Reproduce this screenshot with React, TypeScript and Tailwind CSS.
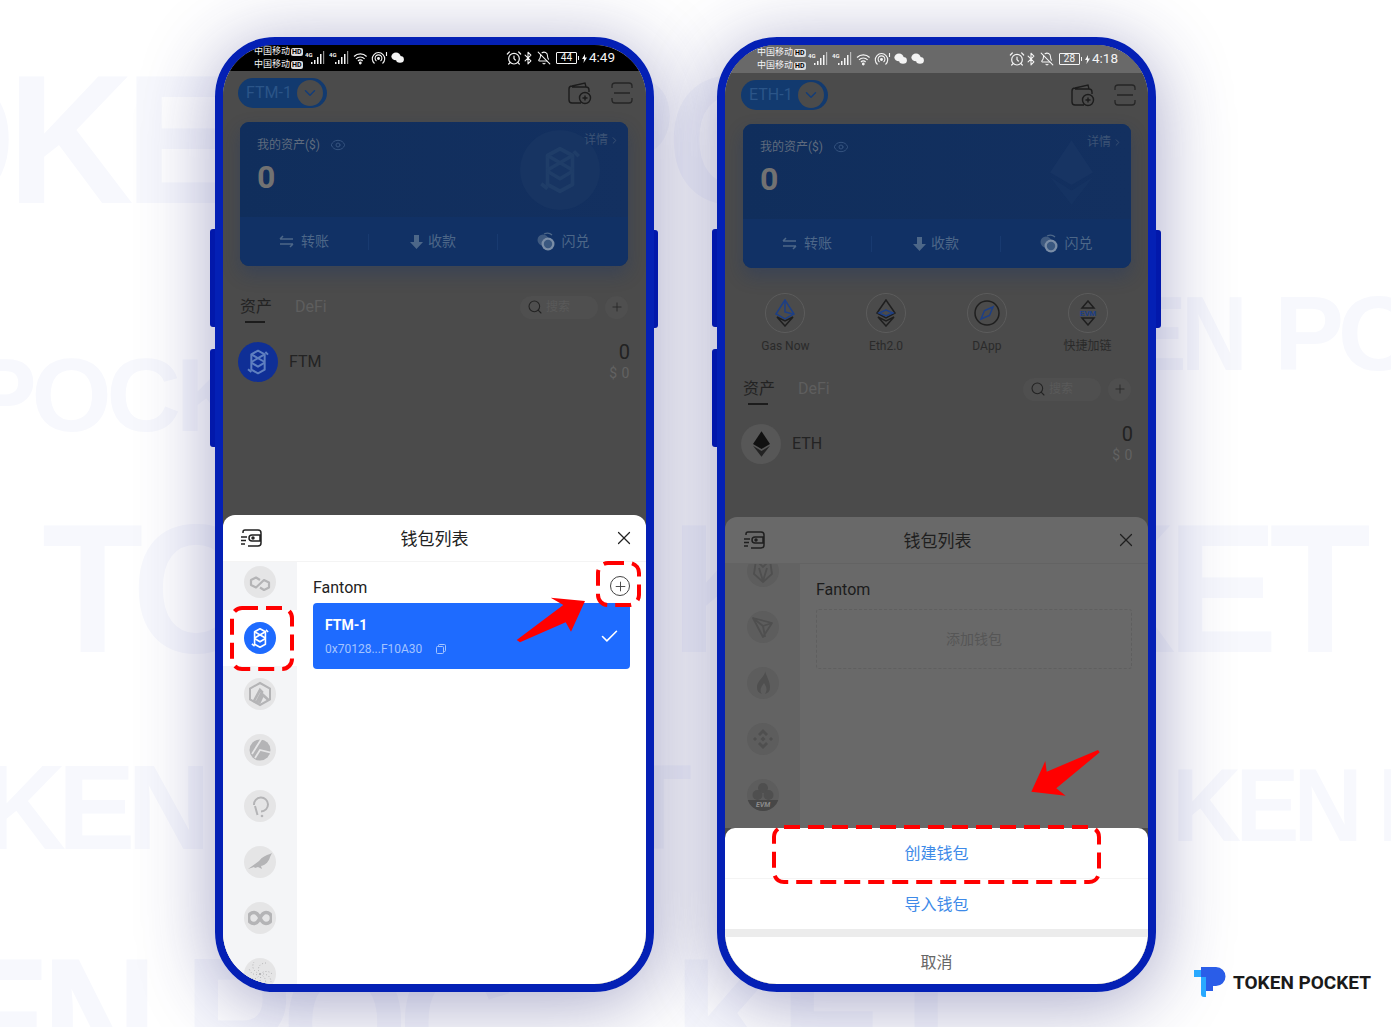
import type { ReactNode } from "react"
import { AlarmClock, BellOff, Bluetooth, Check, ChevronDown, ChevronRight, Eye, Plus, Search, X } from "lucide-react"

const watermarks = [
  { cls: "left-[-120px] top-[47px] text-[184px] tracking-[-0.05em] scale-x-[0.95]", text: "OKE" },
  { cls: "left-[559px] top-[47px] text-[184px] tracking-[-0.05em] scale-x-[0.95]", text: "PO" },
  { cls: "left-[-32px] top-[344px] text-[103px] tracking-[-0.05em]", text: "POCK" },
  { cls: "left-[1125px] top-[281px] text-[105px] tracking-[-0.06em] scale-x-[0.88]", text: "EN" },
  { cls: "left-[1274px] top-[281px] text-[105px] tracking-[-0.06em]", text: "PO" },
  { cls: "left-[42px] top-[496px] text-[184px] tracking-[-0.05em] scale-x-[0.9]", text: "TO" },
  { cls: "left-[671px] top-[496px] text-[184px] tracking-[-0.05em] scale-x-[0.9]", text: "K" },
  { cls: "left-[1056px] top-[496px] text-[184px] tracking-[-0.05em] scale-x-[0.9]", text: "KET" },
  { cls: "left-[-18px] top-[747px] text-[121px] tracking-[-0.07em] scale-x-[0.96]", text: "KEN" },
  { cls: "left-[618px] top-[747px] text-[121px] tracking-[-0.07em]", text: "T" },
  { cls: "left-[1172px] top-[754px] text-[103px] tracking-[-0.06em] scale-x-[0.93]", text: "KEN P" },
  { cls: "left-[-57px] top-[930px] text-[184px] tracking-[-0.06em] scale-x-[0.88]", text: "EN POC" },
  { cls: "left-[674px] top-[930px] text-[184px] tracking-[-0.06em] scale-x-[0.87]", text: "KET" },
]

function Signal() {
  return (
    <svg width="21" height="14" viewBox="0 0 21 14" fill="currentColor">
      <text x="0" y="6" fontSize="6" fontWeight="700" fontFamily="Roboto, sans-serif">4G</text>
      <rect x="6" y="11" width="1.5" height="2" />
      <rect x="9" y="9" width="1.5" height="4" />
      <rect x="12" y="6" width="1.5" height="7" />
      <rect x="15" y="3" width="1.5" height="10" />
      <rect x="18" y="0" width="1.2" height="13" opacity="0.6" />
    </svg>
  )
}

function WechatGlyph() {
  return (
    <svg width="13" height="12" viewBox="0 0 13 12" fill="currentColor">
      <ellipse cx="5" cy="4.4" rx="4.6" ry="3.9" />
      <ellipse cx="9" cy="7.4" rx="3.9" ry="3.3" />
    </svg>
  )
}

function StatusBar({ time, battery, chats, dim }: { time: string; battery: string; chats: number; dim: boolean }) {
  return (
    <div className={dim ? "flex h-[28px] shrink-0 items-center justify-between bg-[#696969] pl-[32px] pr-[30px] text-[#f4f4f4]" : "flex h-[26px] shrink-0 items-center justify-between bg-black pl-[31px] pr-[31px] text-[#f4f4f4]"}>
      <div className="flex items-center">
        <div className="flex w-[49px] flex-col text-[9px] leading-[13px]">
          <span className="flex items-center gap-[1px] whitespace-nowrap">中国移动<b className="rounded-[2px] bg-[#dcdcdc] px-[1px] text-[7px] leading-[8px] text-black">HD</b></span>
          <span className="flex items-center gap-[1px] whitespace-nowrap">中国移动<b className="rounded-[2px] bg-[#dcdcdc] px-[1px] text-[7px] leading-[8px] text-black">HD</b></span>
        </div>
        <div className="ml-[2px] flex items-center gap-[3px]">
          <Signal />
          <Signal />
        </div>
        <svg className="ml-[3px]" width="15" height="13" viewBox="0 0 15 13" fill="none" stroke="currentColor" strokeWidth="1.2">
          <path d="M1 4.500a9 9 0 0 1 12.600 0M3 6.800a6 6 0 0 1 8.600 0M5 9a3 3 0 0 1 4.600 0" />
          <circle cx="7.300" cy="11" r="0.8" fill="currentColor" />
        </svg>
        <svg className="ml-[3px]" width="18" height="14" viewBox="0 0 18 14" fill="none" stroke="currentColor" strokeWidth="1.1">
          <path d="M3.500 12.500a6.200 6.200 0 1 1 8 0M5.500 10a3.400 3.400 0 1 1 4 0" />
          <circle cx="7.500" cy="7.500" r="0.9" fill="currentColor" />
          <path d="M15.500 1v4" />
        </svg>
        <div className="ml-[2px] flex gap-[4px]">
          {Array.from({ length: chats }).map((_, i) => (
            <WechatGlyph key={i} />
          ))}
        </div>
      </div>
      <div className="flex items-center">
        <AlarmClock size={16} strokeWidth={1.8} />
        <Bluetooth size={14} strokeWidth={1.8} className="ml-[-1px]" />
        <BellOff size={14} strokeWidth={1.8} className="ml-[2px]" />
        <span className="ml-[5px] flex h-[12px] w-[21px] items-center justify-center rounded-[1px] border border-current text-[10px] leading-none">{battery}</span>
        <span className="ml-[1px] h-[4px] w-[1px] bg-current" />
        <svg className="ml-[3px]" width="5" height="9" viewBox="0 0 5 9" fill="currentColor">
          <path d="M3 0 0 5h2L1.500 9 5 3.600H3z" />
        </svg>
        <span className="ml-[2px] text-[13.5px] leading-none">{time}</span>
      </div>
    </div>
  )
}

function FantomMark({ className }: { className: string }) {
  return (
    <svg className={className} viewBox="0 0 24 24" fill="none" stroke="currentColor" strokeWidth="1.5" strokeLinejoin="round">
      <path d="M12 3.500 17 6.200V17.800L12 20.500 7 17.800V6.200Z" />
      <path d="M7 6.200 17 12M17 6.200 7 12M7 12.500 12 15.500 17 12.500" />
      <path d="M4.500 17.500 7 19.500M19.500 6.500 17.500 4.500" />
    </svg>
  )
}

function EthMark({ className }: { className: string }) {
  return (
    <svg className={className} viewBox="0 0 24 36" fill="currentColor">
      <path d="M12 0 24 18 12 25 0 18Z" />
      <path d="M12 28 24 20.500 12 36 0 20.500Z" opacity="0.75" />
    </svg>
  )
}

function AssetCard({ watermark }: { watermark: "ftm" | "eth" }) {
  return (
    <div className="ml-[17px] mr-[18px] mt-[14px] h-[144px] overflow-hidden rounded-[9px] bg-[#10305f] shadow-[0_8px_18px_rgba(20,50,110,0.3)]">
      <div className="relative h-[95px] bg-gradient-to-r from-[#102e5c] to-[#133060] pl-[17px] pt-[15px]">
        <div className="flex items-center text-[12px] leading-[16px] text-[#5f6b7d]">
          我的资产($)
          <Eye size={16} strokeWidth={1.5} className="ml-[10px] text-[#35537f]" />
        </div>
        <div className="mt-[6px] text-[32px] font-bold leading-[36px] text-[#727272]">0</div>
        {watermark === "ftm" ? (
          <div className="absolute left-[280px] top-[8px] flex h-[80px] w-[80px] items-center justify-center rounded-full bg-[#173462]">
            <FantomMark className="h-[60px] w-[60px] text-[#1f3d68]" />
          </div>
        ) : (
          <EthMark className="absolute left-[307px] top-[13px] h-[71px] w-[43px] text-[#173463]" />
        )}
        <div className="absolute right-[8px] top-[10px] flex items-center text-[12px] leading-[16px] text-[#3c5375]">
          详情
          <ChevronRight size={11} className="ml-[1px]" />
        </div>
      </div>
      <div className="flex h-[49px] items-center bg-[#113165] text-[14px] text-[#4d6788]">
        <div className="flex h-[16px] w-[129px] items-center justify-end gap-[7px] border-r border-[#183a70] pr-[39px]">
          <svg width="15" height="13" viewBox="0 0 15 13" fill="none" stroke="currentColor" strokeWidth="1.500">
            <path d="M1 4h13M4 1 1 4M14 9H1M11 12l3-3" />
          </svg>
          转账
        </div>
        <div className="flex h-[16px] w-[129px] items-center justify-center gap-[5px] border-r border-[#183a70]">
          <svg width="13" height="14" viewBox="0 0 13 14" fill="currentColor">
            <path d="M4 0h5v7h4l-6.500 7L0 7h4z" />
          </svg>
          收款
        </div>
        <div className="flex flex-1 items-center justify-center gap-[7px]">
          <svg width="18" height="19" viewBox="0 0 18 19" fill="currentColor">
            <circle cx="6" cy="8" r="5.500" opacity="0.75" />
            <circle cx="11" cy="12" r="6.500" fill="#7a8da6" />
            <circle cx="11" cy="12" r="4.200" fill="#3a5880" />
            <path d="M7 2c3-1.500 6-1 8 1" fill="none" stroke="currentColor" strokeWidth="1.200" />
          </svg>
          闪兑
        </div>
      </div>
    </div>
  )
}

function QuickLinks() {
  const links = [
    { label: "Gas Now", icon: <svg width="22" height="28" viewBox="0 0 22 28" fill="none" stroke="#1d3f86" strokeWidth="1.500"><path d="M11 1 2 15l9 5 9-5z" /><path d="M11 1v12l8 2" /><path d="M3 18l8 9 8-9-8 4z" stroke="#1f1f1f" /></svg> },
    { label: "Eth2.0", icon: <svg width="22" height="28" viewBox="0 0 22 28" fill="none" stroke="#1f1f1f" strokeWidth="1.500"><path d="M11 1 2 14l9 5 9-5z" /><path d="M4 14l7-3 7 3-7 3z" stroke="#1d3f86" /><path d="M3 18l8 9 8-9-8 4z" /></svg> },
    { label: "DApp", icon: <svg width="26" height="26" viewBox="0 0 26 26" fill="none" stroke="#1f1f1f" strokeWidth="1.500"><circle cx="13" cy="13" r="12" /><path d="M19 7 15.500 15.500 7 19 10.500 10.500z" stroke="#1d3f86" /></svg> },
    { label: "快捷加链", icon: <svg width="26" height="26" viewBox="0 0 26 26" fill="none" stroke="#1f1f1f" strokeWidth="1.500"><path d="M13 1 7 8h12zM7 18l6 7 6-7z" /><text x="13" y="16" fontSize="8" fontWeight="700" textAnchor="middle" fill="#1d3f86" stroke="none" fontFamily="Roboto, sans-serif">EVM</text></svg> },
  ]
  return (
    <div className="mt-[25px] grid grid-cols-4 pl-[9px] pr-[11px]">
      {links.map((link) => (
        <div key={link.label} className="flex flex-col items-center">
          <div className="flex h-[40px] w-[40px] items-center justify-center rounded-full border border-[#5c5c5c]">{link.icon}</div>
          <span className="mt-[6px] text-[12px] leading-[14px] text-[#2a2a2a]">{link.label}</span>
        </div>
      ))}
    </div>
  )
}

function WalletTop({ name, chain, quick }: { name: string; chain: "ftm" | "eth"; quick: boolean }) {
  return (
    <div className="min-h-0 flex-1 overflow-hidden bg-[#4b4b4b]">
      <div className={quick ? "ml-[1px] mr-[-1px]" : ""}>
        <div className="ml-[15px] mr-[13px] mt-[7px] flex h-[30px] items-center justify-between">
          <div className="flex h-[30px] items-center rounded-full bg-[#123a6f] pl-[8px] pr-[4px]">
            <span className="text-[16px] leading-none text-[#2b5588]">{name}</span>
            <span className="ml-[5px] flex h-[26px] w-[26px] items-center justify-center rounded-full bg-[#4b4b4b]">
              <ChevronDown size={18} strokeWidth={2} className="text-[#143d78]" />
            </span>
          </div>
          <div className="flex items-center gap-[19px] text-[#1c1c1c]">
            <svg width="24" height="23" viewBox="0 0 24 23" fill="none" stroke="currentColor" strokeWidth="1.400">
              <path d="M13 21H4a3 3 0 0 1-3-3V7a3 3 0 0 1 3-3l13-3 1 4M4 5h14a3 3 0 0 1 3 3v2" />
              <circle cx="17" cy="16" r="5.500" />
              <path d="M17 13.500v5M14.500 16h5" />
            </svg>
            <svg width="22" height="22" viewBox="0 0 22 22" fill="none" stroke="#262626" strokeWidth="1.300">
              <path d="M1 6V4a3 3 0 0 1 3-3h14a3 3 0 0 1 3 3v2M1 16v2a3 3 0 0 0 3 3h14a3 3 0 0 0 3-3v-2M3 11h16" />
            </svg>
          </div>
        </div>
        <AssetCard watermark={chain} />
        {quick && <QuickLinks />}
        <div className={quick ? "ml-[17px] mr-[18px] mt-[24px] flex h-[24px] items-center" : "ml-[17px] mr-[18px] mt-[29px] flex h-[24px] items-center"}>
          <div className="relative text-[16px] leading-[20px] text-[#232323]">
            资产
            <span className="absolute left-[5px] top-[24px] h-[2px] w-[20px] bg-[#1c1c1c]" />
          </div>
          <span className="ml-[23px] text-[16px] leading-[20px] text-[#5e5e5e]">DeFi</span>
          <div className="ml-auto flex h-[23px] w-[78px] items-center rounded-full bg-[#4f4f4f] pl-[7px] text-[12px] text-[#5a5a5a]">
            <Search size={16} strokeWidth={1.600} className="text-[#232323]" />
            <span className="ml-[3px]">搜索</span>
          </div>
          <span className="ml-[7px] flex h-[23px] w-[23px] items-center justify-center rounded-full bg-[#4f4f4f]">
            <Plus size={14} strokeWidth={1.600} className="text-[#2a2a2a]" />
          </span>
        </div>
        <div className="ml-[15px] mr-[16px] mt-[23px] flex h-[40px] items-center">
          {chain === "ftm" ? (
            <span className="flex h-[40px] w-[40px] items-center justify-center rounded-full bg-[#0f2f96]">
              <FantomMark className="h-[32px] w-[32px] text-[#5f7fc0]" />
            </span>
          ) : (
            <span className="flex h-[40px] w-[40px] items-center justify-center rounded-full bg-[#575757]">
              <EthMark className="h-[28px] w-[17px] text-[#111111]" />
            </span>
          )}
          <span className="ml-[11px] text-[16px] text-[#232323]">{chain === "ftm" ? "FTM" : "ETH"}</span>
          <div className="ml-auto flex flex-col items-end">
            <span className="text-[20px] leading-[22px] text-[#222222]">0</span>
            <span className="text-[14px] leading-[20px] tracking-[0.5px] text-[#626262]">$ 0</span>
          </div>
        </div>
      </div>
    </div>
  )
}

function ChainGlyph({ name }: { name: string }) {
  switch (name) {
    case "polygon":
      return <svg width="24" height="24" viewBox="0 0 24 24" fill="none" stroke="currentColor" strokeWidth="2.200" strokeLinejoin="round"><path d="M12 10 8 7.500 3 10v5l5 2.500 8-7.500 5 2.500v5L16 20l-4-2.500" /></svg>
    case "fantom":
      return <FantomMark className="h-[26px] w-[26px]" />
    case "arbitrum":
      return <svg width="26" height="26" viewBox="0 0 26 26" fill="none" stroke="currentColor" strokeWidth="2"><path d="M13 2 23 7.500v11L13 24 3 18.500v-11Z" /><path d="M7 20 13 9l2 2-5.500 10.500ZM12 22.500 16 14l5.500 5" strokeWidth="2.600" /></svg>
    case "kcc":
      return (
        <svg width="24" height="24" viewBox="0 0 24 24">
          <circle cx="12" cy="12" r="10.500" fill="currentColor" />
          <path d="M14 0 4 16M7 20 12 12 24 15" fill="none" stroke="#e5e5e6" strokeWidth="1.800" />
        </svg>
      )
    case "polkadot":
      return <svg width="24" height="26" viewBox="0 0 24 26" fill="none" stroke="currentColor" strokeWidth="2"><path d="M6 12a7 7 0 1 1 7 6.500M7 13l2.500 9" /><circle cx="14" cy="23" r="1.300" fill="currentColor" stroke="none" /></svg>
    case "bird":
      return <svg width="26" height="24" viewBox="0 0 26 24" fill="currentColor"><path d="M1 19 12 11c3-4 7-6 11-7l2-1-2 4c-1 4-4 8-9 9l1 3-4-2-3 1-1-1-3 1Z" /></svg>
    case "infinity":
      return <svg width="24" height="16" viewBox="0 0 24 16" fill="none" stroke="currentColor" strokeWidth="3.600"><path d="M12 8c-2-4-4-5.500-6-5.500a5.500 5.500 0 0 0 0 11c2 0 4-1.500 6-5.500s4-5.500 6-5.500a5.500 5.500 0 0 1 0 11c-2 0-4-1.500-6-5.500Z" /></svg>
    case "spiral":
      return <svg width="28" height="28" viewBox="0 0 28 28" fill="none" stroke="currentColor" strokeWidth="1" strokeDasharray="1 2"><path d="M14 14C10 8 14 3 20 3M14 14C8 12 5 7 8 2M14 14c-6 2-10-1-11-6M14 14c-3 6-8 6-12 3M14 14c2 6-1 10-6 12M14 14c6 3 7 8 4 13M14 14c7-1 11 3 11 8M14 14c5-4 10-3 13 1" /></svg>
    case "fox":
      return <svg width="22" height="26" viewBox="0 0 22 26" fill="none" stroke="currentColor" strokeWidth="1.800"><path d="M4 2 2 16l9 8 9-8-2-14-7 7zM7 10l4 13M15 10l-4 13" /></svg>
    case "tron":
      return <svg width="26" height="26" viewBox="0 0 26 26" fill="none" stroke="currentColor" strokeWidth="1.800" strokeLinejoin="round"><path d="M3 4 22 9 13 23Zm0 0 10 8 2 11M13 12l9-3" /></svg>
    case "flame":
      return <svg width="20" height="26" viewBox="0 0 20 26" fill="currentColor"><path d="M12 1c1 5-8 9-8 16a7 7 0 0 0 5 7c-3-4-1-7 2-11 2 3 4 6 1 11a7 7 0 0 0 5-7c0-6-3-9-5-16Z" /></svg>
    case "bnb":
      return <svg width="24" height="24" viewBox="0 0 24 24" fill="currentColor"><path d="M12 2 17 7 15 9 12 6 9 9 7 7ZM2 12l2-2 2 2-2 2ZM18 12l2-2 2 2-2 2ZM12 22l-5-5 2-2 3 3 3-3 2 2ZM12 9.500 14.500 12 12 14.500 9.500 12Z" /></svg>
    case "evm":
      return (
        <span className="relative flex h-[32px] w-[32px] items-center justify-center overflow-hidden rounded-full">
          <svg className="mb-[7px]" width="22" height="20" viewBox="0 0 22 20" fill="currentColor"><circle cx="11" cy="6" r="5" /><circle cx="5.500" cy="13" r="5" /><circle cx="16.500" cy="13" r="5" /></svg>
          <span className="absolute bottom-0 left-0 right-0 flex h-[11px] items-start justify-center bg-[#474747] text-[7px] font-bold italic leading-[10px] text-[#8c8c8c]">EVM</span>
        </span>
      )
    default:
      return null
  }
}

function ChainSidebar({ dim }: { dim: boolean }) {
  const chains = dim ? ["fox", "tron", "flame", "bnb", "evm"] : ["polygon", "fantom", "arbitrum", "kcc", "polkadot", "bird", "infinity", "spiral"]
  return (
    <div className={dim ? "h-full w-[75px] shrink-0 overflow-hidden bg-[#636363] pl-[1px]" : "h-full w-[74px] shrink-0 overflow-hidden bg-[#f4f5f7]"}>
      <div className={dim ? "mt-[-21px] flex flex-col" : "mt-[-8px] flex flex-col"}>
        {chains.map((chain) => {
          const active = chain === "fantom"
          return (
            <div key={chain} className={active ? "flex h-[56px] shrink-0 items-center justify-center bg-white" : "flex h-[56px] shrink-0 items-center justify-center"}>
              <span
                className={
                  active
                    ? "flex h-[32px] w-[32px] items-center justify-center rounded-full bg-[#1e6bff] text-white"
                    : dim
                      ? "flex h-[32px] w-[32px] items-center justify-center rounded-full bg-[#5d5d5d] text-[#4f4f4f]"
                      : "flex h-[32px] w-[32px] items-center justify-center rounded-full bg-[#e5e5e6] text-[#b4b4b6]"
                }
              >
                <ChainGlyph name={chain} />
              </span>
            </div>
          )
        })}
      </div>
    </div>
  )
}

function WalletListSheet({ dim }: { dim: boolean }) {
  return (
    <div className={dim ? "flex h-[311px] shrink-0 flex-col overflow-hidden rounded-t-[12px] bg-[#696969]" : "flex h-[469px] shrink-0 flex-col overflow-hidden rounded-t-[12px] bg-white"}>
      <div className={dim ? "grid h-[47px] shrink-0 grid-cols-[1fr_auto_1fr] items-center border-b border-[#636363] pl-[13px] pr-[11px] text-[#1f1f1f]" : "grid h-[47px] shrink-0 grid-cols-[1fr_auto_1fr] items-center border-b border-[#f4f4f4] pl-[11px] pr-[11px] text-[#222222]"}>
        <svg className={dim ? "ml-[5px]" : "ml-[6px]"} width="22" height="20" viewBox="0 0 22 20" fill="none" stroke="currentColor" strokeWidth="1.500">
          <path d="M3 5V4a2 2 0 0 1 2-2h13a3 3 0 0 1 3 3v10a3 3 0 0 1-3 3H8M12 7h8a1 1 0 0 1 0 0v6h-8a3 3 0 0 1 0-6ZM1 9h6M1 12.500h5M1 16h4" />
          <circle cx="13" cy="10" r="1" fill="currentColor" />
        </svg>
        <span className="pt-[2px] text-[17px] leading-[24px]">钱包列表</span>
        <X size={22} strokeWidth={1.300} className="justify-self-end" />
      </div>
      <div className="flex min-h-0 flex-1">
        <ChainSidebar dim={dim} />
        <div className="min-w-0 flex-1 pl-[16px] pr-[16px]">
          <div className={dim ? "flex h-[41px] items-end justify-between pb-[5px] text-[16px] leading-[20px] text-[#1c1c1c]" : "flex h-[41px] items-end justify-between pb-[5px] text-[16px] leading-[20px] text-[#222222]"}>
            Fantom
            {!dim && (
              <span className="mb-[2px] flex h-[20px] w-[20px] items-center justify-center rounded-full border-[1.5px] border-[#444444]">
                <Plus size={15} strokeWidth={1.500} className="text-[#444444]" />
              </span>
            )}
          </div>
          {dim ? (
            <div className="mt-[4px] flex h-[60px] items-center justify-center rounded-[3px] border border-dashed border-[#5f5f5f] text-[14px] text-[#565656]">添加钱包</div>
          ) : (
            <div className="relative h-[66px] rounded-[4px] bg-[#1e6bff] pl-[12px] pt-[13px]">
              <div className="text-[14px] font-bold leading-[18px] text-white">FTM-1</div>
              <div className="mt-[7px] flex items-center text-[12px] leading-[16px] text-[#a4c4ff]">
                0x70128...F10A30
                <svg className="ml-[14px]" width="10" height="10" viewBox="0 0 10 10" fill="none" stroke="currentColor" strokeWidth="1">
                  <rect x="0.500" y="2.500" width="7" height="7" rx="1" />
                  <path d="M2.500 2.500V1.500a1 1 0 0 1 1-1h5a1 1 0 0 1 1 1v5a1 1 0 0 1-1 1h-1" />
                </svg>
              </div>
              <Check size={21} strokeWidth={1.800} className="absolute right-[10px] top-[23px] text-white" />
            </div>
          )}
        </div>
      </div>
    </div>
  )
}

function CreateActions() {
  return (
    <div className="flex h-[156px] shrink-0 flex-col rounded-t-[10px] bg-white text-[16px]">
      <div className="flex h-[51px] items-center justify-center border-b border-[#f4f4f4] pt-[2px] text-[#3e8ae8]">创建钱包</div>
      <div className="flex h-[50px] items-center justify-center pt-[2px] text-[#3e8ae8]">导入钱包</div>
      <div className="h-[8px] bg-[#ececec]" />
      <div className="flex flex-1 items-center justify-center pt-[5px] text-[#666666]">取消</div>
    </div>
  )
}

function Phone({ children, second }: { children: ReactNode; second: boolean }) {
  return (
    <div className="relative h-[955px] w-[439px] shrink-0 rounded-[60px] border-[8px] border-[#0420b5]">
      <span className="absolute left-[-13px] top-[184px] h-[98px] w-[5px] rounded-l-[3px] bg-[#0218ab]" />
      <span className="absolute left-[-13px] top-[304px] h-[98px] w-[5px] rounded-l-[3px] bg-[#0218ab]" />
      <span className={second ? "absolute right-[-13px] top-[185px] h-[98px] w-[5px] rounded-r-[3px] bg-[#0218ab]" : "absolute right-[-12px] top-[185px] h-[98px] w-[4px] rounded-r-[3px] bg-[#0218ab]"} />
      <div className="flex h-full flex-col overflow-hidden rounded-[52px] bg-[#4b4b4b]">{children}</div>
    </div>
  )
}

export default function App() {
  return (
    <div className="relative h-[1027px] w-[1391px] overflow-hidden bg-white font-[Roboto,'Noto_Sans_CJK_SC',sans-serif]">
      {watermarks.map((mark) => (
        <span key={mark.cls} className={`absolute origin-left whitespace-pre font-['Liberation_Sans',sans-serif] font-bold leading-none text-[#f7f8fd] ${mark.cls}`}>
          {mark.text}
        </span>
      ))}
      <div className="absolute left-[215px] top-[37px] h-[955px] w-[439px] rounded-[60px] shadow-[0_10px_75px_rgba(40,40,120,0.42)]" />
      <div className="absolute left-[717px] top-[37px] h-[955px] w-[439px] rounded-[60px] shadow-[0_10px_75px_rgba(40,40,120,0.42)]" />

      <div className="relative flex gap-[63px] pl-[215px] pt-[37px]">
        <Phone second={false}>
          <StatusBar time="4:49" battery="44" chats={1} dim={false} />
          <WalletTop name="FTM-1" chain="ftm" quick={false} />
          <WalletListSheet dim={false} />
        </Phone>
        <Phone second>
          <StatusBar time="4:18" battery="28" chats={2} dim />
          <WalletTop name="ETH-1" chain="eth" quick />
          <WalletListSheet dim />
          <CreateActions />
        </Phone>
      </div>

      {/* annotations drawn over the phones */}
      <svg className="absolute inset-0" width="1391" height="1027" viewBox="0 0 1391 1027" fill="none">
        <g stroke="#ff0000" strokeWidth="4" strokeDasharray="16 8">
          <rect x="232" y="608" width="60" height="61" rx="10" />
          <rect x="598" y="563" width="41" height="42" rx="10" />
          <rect x="774" y="827" width="325" height="55" rx="10" />
        </g>
        <polygon fill="#ff0000" points="516.700,640 563.300,605 550.700,597.700 585,601 571,631.700 565.700,622.300 520,642.300" />
        <polygon fill="#ff0000" points="1031.300,791.700 1045.300,761 1046.700,771.700 1098,750 1099.700,752.300 1056.300,788.300 1065.700,795.700" />
      </svg>

      <div className="absolute left-[1194px] top-[967px] flex items-center">
        <svg width="32" height="30" viewBox="0 0 32 30">
          <path d="M0 3h12v27H10a3 3 0 0 1-3-3V10H0Z" fill="#29a9ff" />
          <path d="M7 0h15a9.500 9.500 0 0 1 0 19h-3v5H12V10H7Z" fill="#2a5de8" />
        </svg>
        <span className="ml-[7px] whitespace-nowrap font-['Roboto',sans-serif] text-[19px] font-bold leading-none text-[#1a1a1a]">TOKEN POCKET</span>
      </div>
    </div>
  )
}
